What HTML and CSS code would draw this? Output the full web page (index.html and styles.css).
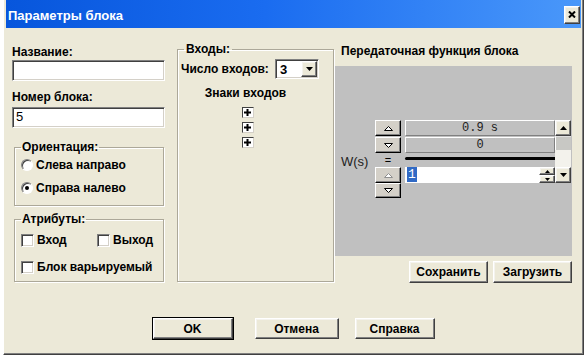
FILE: index.html
```html
<!DOCTYPE html>
<html lang="ru">
<head>
<meta charset="utf-8">
<title>Параметры блока</title>
<link rel="stylesheet" href="styles.css">
</head>
<body>
<div class="win">
  <div class="titlebar">
    <span class="title">Параметры блока</span>
    <span class="close raised"><svg width="8" height="7" viewBox="0 0 8 7"><path d="M1 0.5 L7 6.5 M7 0.5 L1 6.5" stroke="#000" stroke-width="2"/></svg></span>
  </div>
  <div class="body">
    <div class="cols">
      <div class="col-left">
        <div class="lbl">Название:</div>
        <div class="field sunken"></div>
        <div class="lbl lbl2">Номер блока:</div>
        <div class="field sunken">5</div>

        <fieldset class="group orient">
          <legend>Ориентация:</legend>
          <div class="opt"><span class="radio"></span>Слева направо</div>
          <div class="opt opt2"><span class="radio on"></span>Справа налево</div>
        </fieldset>

        <fieldset class="group attrs">
          <legend>Атрибуты:</legend>
          <div class="opt-row">
            <div class="opt w76"><span class="check"></span>Вход</div>
            <div class="opt"><span class="check"></span>Выход</div>
          </div>
          <div class="opt opt3"><span class="check"></span>Блок варьируемый</div>
        </fieldset>
      </div>

      <fieldset class="group inputs">
        <legend>Входы:</legend>
        <div class="count-row">
          <span class="count-lbl">Число входов:</span>
          <span class="select sunken"><span class="sel-val">3</span><span class="sel-btn raised"><svg width="7" height="4" viewBox="0 0 7 4"><path d="M0 0h7L3.5 4z" fill="#000"/></svg></span></span>
        </div>
        <div class="signs">
          <div class="signs-title">Знаки входов</div>
          <span class="plus" title="+"><svg width="7" height="7" viewBox="0 0 7 7"><path d="M2.5 0h2v2.5H7v2H4.5V7h-2V4.5H0v-2h2.5z" fill="#000"/></svg></span>
          <span class="plus" title="+"><svg width="7" height="7" viewBox="0 0 7 7"><path d="M2.5 0h2v2.5H7v2H4.5V7h-2V4.5H0v-2h2.5z" fill="#000"/></svg></span>
          <span class="plus" title="+"><svg width="7" height="7" viewBox="0 0 7 7"><path d="M2.5 0h2v2.5H7v2H4.5V7h-2V4.5H0v-2h2.5z" fill="#000"/></svg></span>
        </div>
      </fieldset>

      <div class="col-right">
        <div class="lbl rlbl">Передаточная функция блока</div>
        <div class="panel">
          <div class="formula">
            <div class="ws">W(s)</div>
            <span class="pbtn r1"><svg width="9" height="5" viewBox="0 0 9 5"><path d="M0.5 4.5 L4.5 0.5 L8.5 4.5 Z" fill="#fff" stroke="#000"/></svg></span>
            <div class="coef r1">0.9 s</div>
            <div class="scroll">
              <span class="sb-btn raised"><svg width="7" height="4" viewBox="0 0 7 4"><path d="M0 4h7L3.5 0z" fill="#000"/></svg></span>
              <span class="sb-thumb"></span>
              <span class="sb-track"></span>
              <span class="sb-btn raised"><svg width="7" height="4" viewBox="0 0 7 4"><path d="M0 0h7L3.5 4z" fill="#000"/></svg></span>
            </div>
            <span class="pbtn r2"><svg width="9" height="5" viewBox="0 0 9 5"><path d="M0.5 0.5 L8.5 0.5 L4.5 4.5 Z" fill="#fff" stroke="#000"/></svg></span>
            <div class="coef r2">0</div>
            <div class="eq">=</div>
            <div class="bar"></div>
            <span class="pbtn r4 dis"><svg width="9" height="5" viewBox="0 0 9 5"><path d="M0.5 4.5 L4.5 0.5 L8.5 4.5 Z" fill="#fff" stroke="#909090"/></svg></span>
            <div class="den">
              <span class="den-val"><span class="sel">1</span></span>
              <span class="spin">
                <span class="spin-btn raised"><svg width="5" height="3" viewBox="0 0 5 3"><path d="M0 3h5L2.5 0z" fill="#000"/></svg></span>
                <span class="spin-btn raised"><svg width="5" height="3" viewBox="0 0 5 3"><path d="M0 0h5L2.5 3z" fill="#000"/></svg></span>
              </span>
            </div>
            <span class="pbtn r5"><svg width="9" height="5" viewBox="0 0 9 5"><path d="M0.5 0.5 L8.5 0.5 L4.5 4.5 Z" fill="#fff" stroke="#000"/></svg></span>
          </div>
        </div>
        <div class="file-btns">
          <span class="btn raised">Сохранить</span>
          <span class="btn raised">Загрузить</span>
        </div>
      </div>
    </div>
    <div class="footer">
      <span class="btn raised default">OK</span>
      <span class="btn raised w84">Отмена</span>
      <span class="btn raised">Справка</span>
    </div>
  </div>
</div>
</body>
</html>
```

FILE: styles.css
```css
* { box-sizing: border-box; }
html, body { margin: 0; padding: 0; background: #fff; }
body {
  width: 586px; height: 358px; overflow: hidden;
  font-family: "Liberation Sans", Arial, sans-serif;
  font-size: 12px; color: #000;
}
.win {
  margin-left: 3px; width: 581px; height: 355px;
  background: #ece9d8;
  border-left: 1px solid #fff; border-right: 1px solid #404040; border-bottom: 1px solid #404040;
  box-shadow: inset -1px -1px 0 #808080;
  padding: 0 2px 2px 2px;
  display: flex; flex-direction: column;
}
.raised {
  border: 1px solid; border-color: #fff #404040 #404040 #fff;
  box-shadow: inset -1px -1px 0 #808080, inset 1px 1px 0 #f4f3ee;
  background: #ece9d8;
}
.sunken {
  border: 1px solid; border-color: #808080 #fff #fff #808080;
  box-shadow: inset 1px 1px 0 #404040, inset -1px -1px 0 #d4d0c8;
  background: #fff;
}
.titlebar {
  height: 28px; flex: none;
  background: linear-gradient(to right, #0756dc 0%, #1a6cf0 45%, #4a98fa 100%);
  display: flex; align-items: center; justify-content: space-between;
  padding: 3px 1px 0 2px;
}
.title { color: #fff; font-weight: bold; font-size: 13px; }
.close {
  width: 16px; height: 18px; display: flex; align-items: center; justify-content: center;
  margin-top: -2px;
}
.body { flex: 1; padding-left: 6px; display: flex; flex-direction: column; }
.cols { display: flex; margin-top: 14px; }
.lbl { font-weight: bold; line-height: 14px; }
.col-left { width: 153px; padding-top: 3px; }
.field {
  height: 21px; margin-top: 1px; width: 153px;
  font-size: 13px; line-height: 18px; padding-left: 3px;
}
.lbl2 { margin-top: 9px; }
.lbl2 + .field { margin-top: 3px; }
.group {
  margin: 0; padding: 0 0 0 6px; min-width: 0;
  border: 1px solid #aca899; box-shadow: inset 1px 1px 0 #fff, 1px 1px 0 #fff;
  border-radius: 0;
}
.group legend { font-weight: bold; line-height: 14px; padding: 0 1px; }
.orient { margin: 12px 0 0 2px; width: 150px; height: 66px; }
.attrs { margin: 6px 0 0 2px; width: 150px; height: 70px; }
.opt { display: flex; align-items: center; font-weight: bold; height: 16px; }
.orient .opt:first-of-type { margin-top: 3px; }
.opt2 { margin-top: 7px; }
.radio {
  width: 12px; height: 12px; border-radius: 50%; margin-right: 3px;
  background: #fff; border: 1px solid; border-color: #808080 #fff #fff #808080;
  box-shadow: inset 1px 1px 0 #404040;
  display: flex; align-items: center; justify-content: center;
}
.radio.on::after { content: ""; width: 4px; height: 4px; border-radius: 50%; background: #000; }
.opt-row { display: flex; margin-top: 6px; }
.w76 { width: 76px; }
.opt3 { margin-top: 11px; }
.check {
  width: 13px; height: 13px; margin-right: 3px; background: #fff;
  border: 1px solid; border-color: #808080 #fff #fff #808080;
  box-shadow: inset 1px 1px 0 #404040, inset -1px -1px 0 #d4d0c8;
}
.inputs {
  margin: 0 0 0 12px; width: 157px; height: 240px; padding: 0 3px;
}
.inputs legend { margin-left: 3px; padding: 0 2px; }
.count-row { display: flex; align-items: center; margin-top: 3px; }
.count-lbl { font-weight: bold; width: 94px; }
.select {
  width: 44px; height: 20px; display: flex; align-items: center; justify-content: space-between;
  padding: 0 1px 0 4px; font-size: 13px; font-weight: bold;
}
.sel-btn { width: 16px; height: 16px; display: flex; align-items: center; justify-content: center; }
.signs { display: flex; flex-direction: column; align-items: center; padding-right: 20px; }
.signs-title { font-weight: bold; line-height: 14px; margin-top: 7px; margin-bottom: 7px; }
.plus {
  width: 12px; height: 11px; margin-bottom: 4px; margin-left: 4px;
  border: 1px solid; border-color: #404040 #d4d0c8 #d4d0c8 #404040; background: #fff;
  display: flex; align-items: center; justify-content: center;
}
.col-right { width: 237px; margin-left: 1px; padding-top: 2px; }
.rlbl { padding-left: 6px; }
.panel { margin-top: 8px; height: 190px; width: 237px; background: #c0c0c0; padding: 54px 0 0 6px; }
.formula {
  display: grid;
  grid-template-columns: 34px 30px 150px 16px;
  grid-template-rows: 17px 17px 13px 16px 15px;
}
.ws { grid-column: 1; grid-row: 3; align-self: center; font-size: 13px; color: #222; line-height: 14px; margin-top: 2px; }
.pbtn {
  grid-column: 2; width: 26px; height: 16px; display: flex; align-items: center; justify-content: center;
  background: #d4d0c8; border: 1px solid; border-color: #fff #000 #000 #fff;
  box-shadow: inset -1px -1px 0 #808080;
}
.r1 { grid-row: 1; } .r2 { grid-row: 2; } .r4 { grid-row: 4; } .r5 { grid-row: 5; height: 15px; }
.coef {
  grid-column: 3; height: 16px; background: #c0c0c0;
  border: 1px solid; border-color: #fff #808080 #808080 #fff;
  font-family: "Liberation Mono", "Courier New", monospace; font-size: 12px; color: #222;
  text-align: center; line-height: 14px;
}
.eq { grid-column: 2; grid-row: 3; width: 26px; text-align: center; font-size: 11px; line-height: 12px; }
.bar { grid-column: 3; grid-row: 3; height: 3px; margin-top: 3px; background: #000; border-radius: 2px 0 0 2px; }
.den { grid-column: 3; grid-row: 4; display: flex; height: 16px; background: #fff; }
.den-val { flex: 1; padding: 1px 0 0 2px; font-family: "Liberation Mono", monospace; font-size: 13px; line-height: 14px; }
.sel { background: #316ac5; color: #fff; padding: 0 1px; }
.spin { width: 16px; display: flex; flex-direction: column; }
.spin-btn { height: 8px; display: flex; align-items: center; justify-content: center; }
.scroll { grid-column: 4; grid-row: 1 / 5; display: flex; flex-direction: column; }
.sb-btn { width: 16px; height: 16px; flex: none; display: flex; align-items: center; justify-content: center; }
.sb-thumb { height: 14px; background: #c8c8c4; border-left: 1px solid #fff; border-top: 1px solid #e0e0e0; }
.sb-track { flex: 1; background: #f3f2ec; }
.file-btns { display: flex; justify-content: flex-end; gap: 5px; margin-top: 5px; }
.btn {
  width: 79px; height: 22px; display: flex; align-items: center; justify-content: center;
  font-weight: bold;
}
.footer { display: flex; justify-content: center; margin-top: 35px; padding-right: 6px; }
.footer .btn { width: 80px; height: 21px; }
.footer .default { outline: 1px solid #000; outline-offset: 0; border-color: #fff #404040 #404040 #fff; margin-right: 22px; }
.footer .w84 { width: 84px; margin-right: 16px; }
```
